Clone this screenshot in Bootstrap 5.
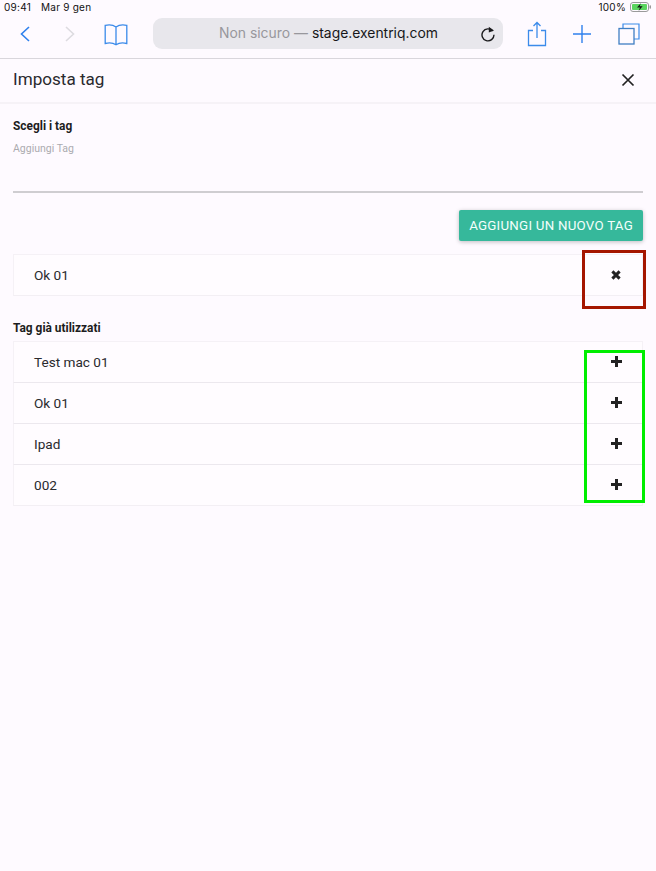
<!DOCTYPE html>
<html lang="it">
  <head>
    <meta charset="UTF-8" />
    <meta name="viewport" content="width=device-width, initial-scale=1.0" />
    <title>Imposta tag</title>
    <link href="https://cdn.jsdelivr.net/npm/bootstrap@5.3.2/dist/css/bootstrap.min.css" rel="stylesheet" />
    <style>
      body {
        background-color: #fefaff;
        color: #212529;
        font-family: Roboto, "Liberation Sans", sans-serif;
        height: 871px;
        overflow: hidden;
        position: relative;
      }
      .status-row {
        height: 14px;
        padding: 0 4px;
        font-family: Inter, "Liberation Sans", sans-serif;
        font-size: 10px;
        line-height: 14px;
        color: #111;
        letter-spacing: 0.25px;
      }
      .status-date { margin-left: 10px; }
      .safari-bar {
        height: 45px;
        border-bottom: 1px solid #d9d6dc;
        position: relative;
      }
      .safari-icon { flex: none; display: block; }
      .back-icon { margin-left: 18px; }
      .forward-icon { margin-left: 31px; }
      .book-icon { margin-left: 26px; margin-top: 9px; }
      .share-icon { margin-left: 24px; margin-top: 7px; }
      .plus-icon { margin-left: 25px; margin-top: 10px; }
      .tabs-icon { margin-left: 26px; margin-top: 9px; }
      .url-pill {
        width: 350px;
        height: 31px;
        margin-left: 24px;
        margin-top: 4px;
        background: #e8e7ec;
        border-radius: 9px;
        font-family: Inter, "Liberation Sans", sans-serif;
        font-size: 13.9px;
        padding-left: 66px;
        padding-right: 7px;
      }
      .url-muted { color: #98979c; margin-right: 4px; }
      .url-host { color: #17171a; }
      .sheet-head {
        height: 45px;
        padding: 0 13px 2px;
        border-bottom: 2px solid #f6f2f7;
      }
      .sheet-title { font-size: 17.1px; font-weight: 400; color: #2a2a2e; margin: 0; }
      .sheet-close { margin-right: 8px; }
      .sheet-body { padding: 15px 13px 0; }
      .field-title {
        font-size: 11.9px;
        font-weight: 700;
        line-height: 14px;
        color: #1d1d20;
      }
      .field-hint {
        font-size: 10.5px;
        line-height: 12px;
        color: #ababaf;
        margin-top: 10px;
      }
      .tag-input {
        display: block;
        width: 100%;
        height: 26px;
        margin-top: 12px;
        border: 0;
        border-bottom: 2px solid #cfcdd1;
        background: transparent;
        outline: 0;
      }
      .btn-row { margin-top: 17px; margin-bottom: 13px; }
      .add-btn {
        background: #36b89b;
        color: #f4fffb;
        border: 0;
        border-radius: 2px;
        font-size: 13.3px;
        line-height: 16px;
        height: 31px;
        padding: 0 10px;
        letter-spacing: 0.25px;
        box-shadow: 0 1px 4px rgba(0, 0, 0, 0.25);
      }
      .tag-list { --bs-list-group-bg: transparent; --bs-list-group-border-radius: 0; }
      .tag-row {
        height: 41px;
        padding: 0 0 0 20px;
        background: #fffcff;
        border-color: #f5f1f6;
        border-bottom-color: #ece8ee;
        font-size: 13.6px;
        color: #2a2a2e;
      }
      .tag-row:first-child { height: 42px; }
      .tag-row:last-child { border-bottom-color: #f3eff4; }
      .row-action { width: 52px; height: 100%; }
      .row-action-plus { padding-bottom: 1px; }
      .pick-title { margin-top: 25px; margin-bottom: 6px; }
      .mark-box { position: absolute; pointer-events: none; }
      .mark-red { left: 582px; top: 250px; width: 64px; height: 59px; border: 3px solid #a51600; }
      .mark-green { left: 584px; top: 350px; width: 61px; height: 153px; border: 3px solid #00ee00; }
    </style>
  </head>
  <body>
    <div class="status-row d-flex align-items-center">
      <span>09:41</span>
      <span class="status-date">Mar 9 gen</span>
      <span class="ms-auto me-1">100%</span>
      <svg class="safari-icon" width="22" height="10" viewBox="0 0 22 10">
        <rect x="0.5" y="0.5" width="18" height="9" rx="2.5" fill="none" stroke="#9a9a9a" />
        <rect x="2" y="2" width="15" height="6" rx="1" fill="#5bd55f" />
        <rect x="19.5" y="3.2" width="1.5" height="3.6" rx="0.7" fill="#9a9a9a" />
        <path d="M11 1 7 5.6h3L8.6 9l4-4.8h-3z" fill="#111" />
      </svg>
    </div>

    <div class="safari-bar d-flex align-items-start">
      <svg class="safari-icon back-icon mt-2" width="14" height="24" viewBox="0 0 14 24">
        <path d="M11 5 3.5 12 11 19" fill="none" stroke="#2f80ed" stroke-width="1.6" />
      </svg>
      <svg class="safari-icon forward-icon mt-2" width="14" height="24" viewBox="0 0 14 24">
        <path d="M3 5 10.5 12 3 19" fill="none" stroke="#dddbe0" stroke-width="1.6" />
      </svg>
      <svg class="safari-icon book-icon" width="26" height="24" viewBox="0 0 26 24">
        <path d="M13 4C10 1.8 6 1.6 2.2 2.4V20.5C6 19.6 10 19.8 13 21.8 16 19.8 20 19.6 23.8 20.5V2.4C20 1.6 16 1.8 13 4ZM13 4V21.8" fill="none" stroke="#3b8bea" stroke-width="1.3" />
      </svg>
      <div class="url-pill d-flex align-items-center">
        <span class="url-muted">Non sicuro —</span>
        <span class="url-host">stage.exentriq.com</span>
        <svg class="safari-icon ms-auto" width="16" height="16" viewBox="0 0 16 16">
          <path d="M12.6 5A6 6 0 1 0 14 8.8" fill="none" stroke="#1a1a1c" stroke-width="1.4" />
          <path d="M8.8 0.8 14 4.4 8.8 6.6z" fill="#1a1a1c" />
        </svg>
      </div>
      <svg class="safari-icon share-icon" width="20" height="26" viewBox="0 0 20 26">
        <path d="M6 9.5H1.5V24.5H18.5V9.5H14M10 1.5V17M6.5 5 10 1.5 13.5 5" fill="none" stroke="#3b8bea" stroke-width="1.3" />
      </svg>
      <svg class="safari-icon plus-icon" width="20" height="20" viewBox="0 0 20 20">
        <path d="M10 1V19M1 10H19" fill="none" stroke="#2f80ed" stroke-width="1.4" />
      </svg>
      <svg class="safari-icon tabs-icon" width="22" height="22" viewBox="0 0 22 22">
        <path d="M5 5V1H21V16H16" fill="none" stroke="#3b8bea" stroke-width="1.2" />
        <rect x="1" y="5.5" width="15" height="15.5" fill="none" stroke="#3f7fc4" stroke-width="1.3" />
      </svg>
    </div>

    <div class="sheet-head d-flex align-items-center justify-content-between">
      <h5 class="sheet-title">Imposta tag</h5>
      <svg class="safari-icon sheet-close" width="14" height="14" viewBox="0 0 14 14">
        <path d="M1.5 1.5 12.5 12.5M12.5 1.5 1.5 12.5" fill="none" stroke="#222" stroke-width="1.7" />
      </svg>
    </div>

    <div class="sheet-body">
      <div class="field-title">Scegli i tag</div>
      <div class="field-hint">Aggiungi Tag</div>
      <input class="tag-input" type="text" aria-label="Aggiungi Tag" />
      <div class="btn-row d-flex justify-content-end">
        <button class="add-btn" type="button">AGGIUNGI UN NUOVO TAG</button>
      </div>

      <ul class="list-group tag-list">
        <li class="list-group-item tag-row d-flex align-items-center justify-content-between">
          <span>Ok 01</span>
          <span class="row-action d-flex align-items-center justify-content-center">
            <svg width="10" height="10" viewBox="0 0 10 10"><path d="M1.4 1.4 8.6 8.6M8.6 1.4 1.4 8.6" stroke="#222" stroke-width="3" /></svg>
          </span>
        </li>
      </ul>

      <div class="field-title pick-title">Tag già utilizzati</div>

      <ul class="list-group tag-list">
        <li class="list-group-item tag-row d-flex align-items-center justify-content-between">
          <span>Test mac 01</span>
          <span class="row-action row-action-plus d-flex align-items-center justify-content-center">
            <svg width="11" height="11" viewBox="0 0 11 11"><path d="M5.5 0V11M0 5.5H11" stroke="#222" stroke-width="3" /></svg>
          </span>
        </li>
        <li class="list-group-item tag-row d-flex align-items-center justify-content-between">
          <span>Ok 01</span>
          <span class="row-action row-action-plus d-flex align-items-center justify-content-center">
            <svg width="11" height="11" viewBox="0 0 11 11"><path d="M5.5 0V11M0 5.5H11" stroke="#222" stroke-width="3" /></svg>
          </span>
        </li>
        <li class="list-group-item tag-row d-flex align-items-center justify-content-between">
          <span>Ipad</span>
          <span class="row-action row-action-plus d-flex align-items-center justify-content-center">
            <svg width="11" height="11" viewBox="0 0 11 11"><path d="M5.5 0V11M0 5.5H11" stroke="#222" stroke-width="3" /></svg>
          </span>
        </li>
        <li class="list-group-item tag-row d-flex align-items-center justify-content-between">
          <span>002</span>
          <span class="row-action row-action-plus d-flex align-items-center justify-content-center">
            <svg width="11" height="11" viewBox="0 0 11 11"><path d="M5.5 0V11M0 5.5H11" stroke="#222" stroke-width="3" /></svg>
          </span>
        </li>
      </ul>
    </div>

    <div class="mark-box mark-red"></div>
    <div class="mark-box mark-green"></div>

    <script src="https://cdn.jsdelivr.net/npm/bootstrap@5.3.2/dist/js/bootstrap.bundle.min.js"></script>
  </body>
</html>
